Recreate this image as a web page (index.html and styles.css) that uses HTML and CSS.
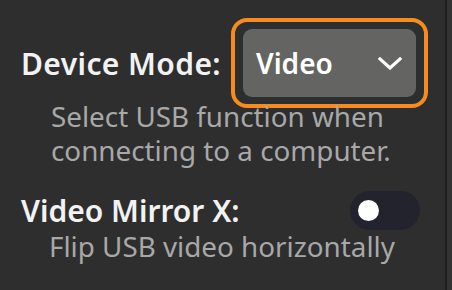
FILE: index.html
```html
<!DOCTYPE html>
<html lang="en">
<head>
    <meta charset="UTF-8">
    <meta name="viewport" content="width=device-width, initial-scale=1.0">
    <title>USB Settings</title>
    <link rel="stylesheet" href="styles.css">
</head>
<body>
    <div class="panel">
        <div class="setting-row">
            <span class="setting-label label-mode">Device Mode:</span>
            <div class="select-wrap">
                <div class="select-box">
                    <span>Video</span>
                    <svg class="chevron" width="24" height="13" viewBox="0 0 24 13">
                        <polyline points="2,2 12,11 22,2" fill="none" stroke="#fff" stroke-width="3.2" stroke-linecap="square" stroke-linejoin="miter"/>
                    </svg>
                </div>
            </div>
        </div>
        <p class="setting-desc desc-first">Select USB function when<br>connecting to a computer.</p>

        <div class="setting-row toggle-row">
            <span class="setting-label">Video Mirror X:</span>
            <div class="toggle"><div class="knob"></div></div>
        </div>
        <p class="setting-desc desc-second">Flip USB video horizontally</p>
    </div>
</body>
</html>
```

FILE: styles.css
```css
* {
    margin: 0;
    padding: 0;
    box-sizing: border-box;
}
body {
    font-family: 'Noto Sans', 'DejaVu Sans', sans-serif;
    background-color: #333333;
    width: 452px;
    height: 290px;
    overflow: hidden;
}
.panel {
    width: 447px;
    height: 290px;
    background-color: #2e2e2e;
    border-right: 2px solid #1e1e1e;
}
.setting-row {
    display: flex;
    align-items: center;
    padding-left: 21px;
    padding-top: 18px;
}
.setting-label {
    color: #f2f2f2;
    font-size: 30px;
    font-weight: 600;
}
.label-mode {
    letter-spacing: 0.4px;
}
.select-wrap {
    margin-left: 10px;
    border: 4px solid #f88b1d;
    border-radius: 16px;
    padding: 7px 8px;
    background-color: #2b2f30;
}
.select-box {
    width: 173px;
    height: 68px;
    background-color: #646562;
    border-radius: 9px;
    display: flex;
    align-items: center;
    justify-content: space-between;
    padding: 0 14px 0 13px;
    color: #fff;
    font-size: 28px;
    font-weight: 600;
}
.setting-desc {
    color: #a8a8a8;
    font-size: 27.8px;
    line-height: 34px;
    padding-left: 51px;
}
.desc-first {
    margin-top: -9px;
}
.toggle-row {
    justify-content: space-between;
    padding-top: 23px;
    padding-right: 25px;
}
.toggle {
    width: 70px;
    height: 39px;
    border-radius: 20px;
    background-color: #23232e;
    display: flex;
    align-items: center;
    padding-left: 8px;
}
.knob {
    width: 21px;
    height: 21px;
    border-radius: 50%;
    background-color: #fff;
}
.desc-second {
    margin-top: -2px;
    padding-left: 49px;
}
```
